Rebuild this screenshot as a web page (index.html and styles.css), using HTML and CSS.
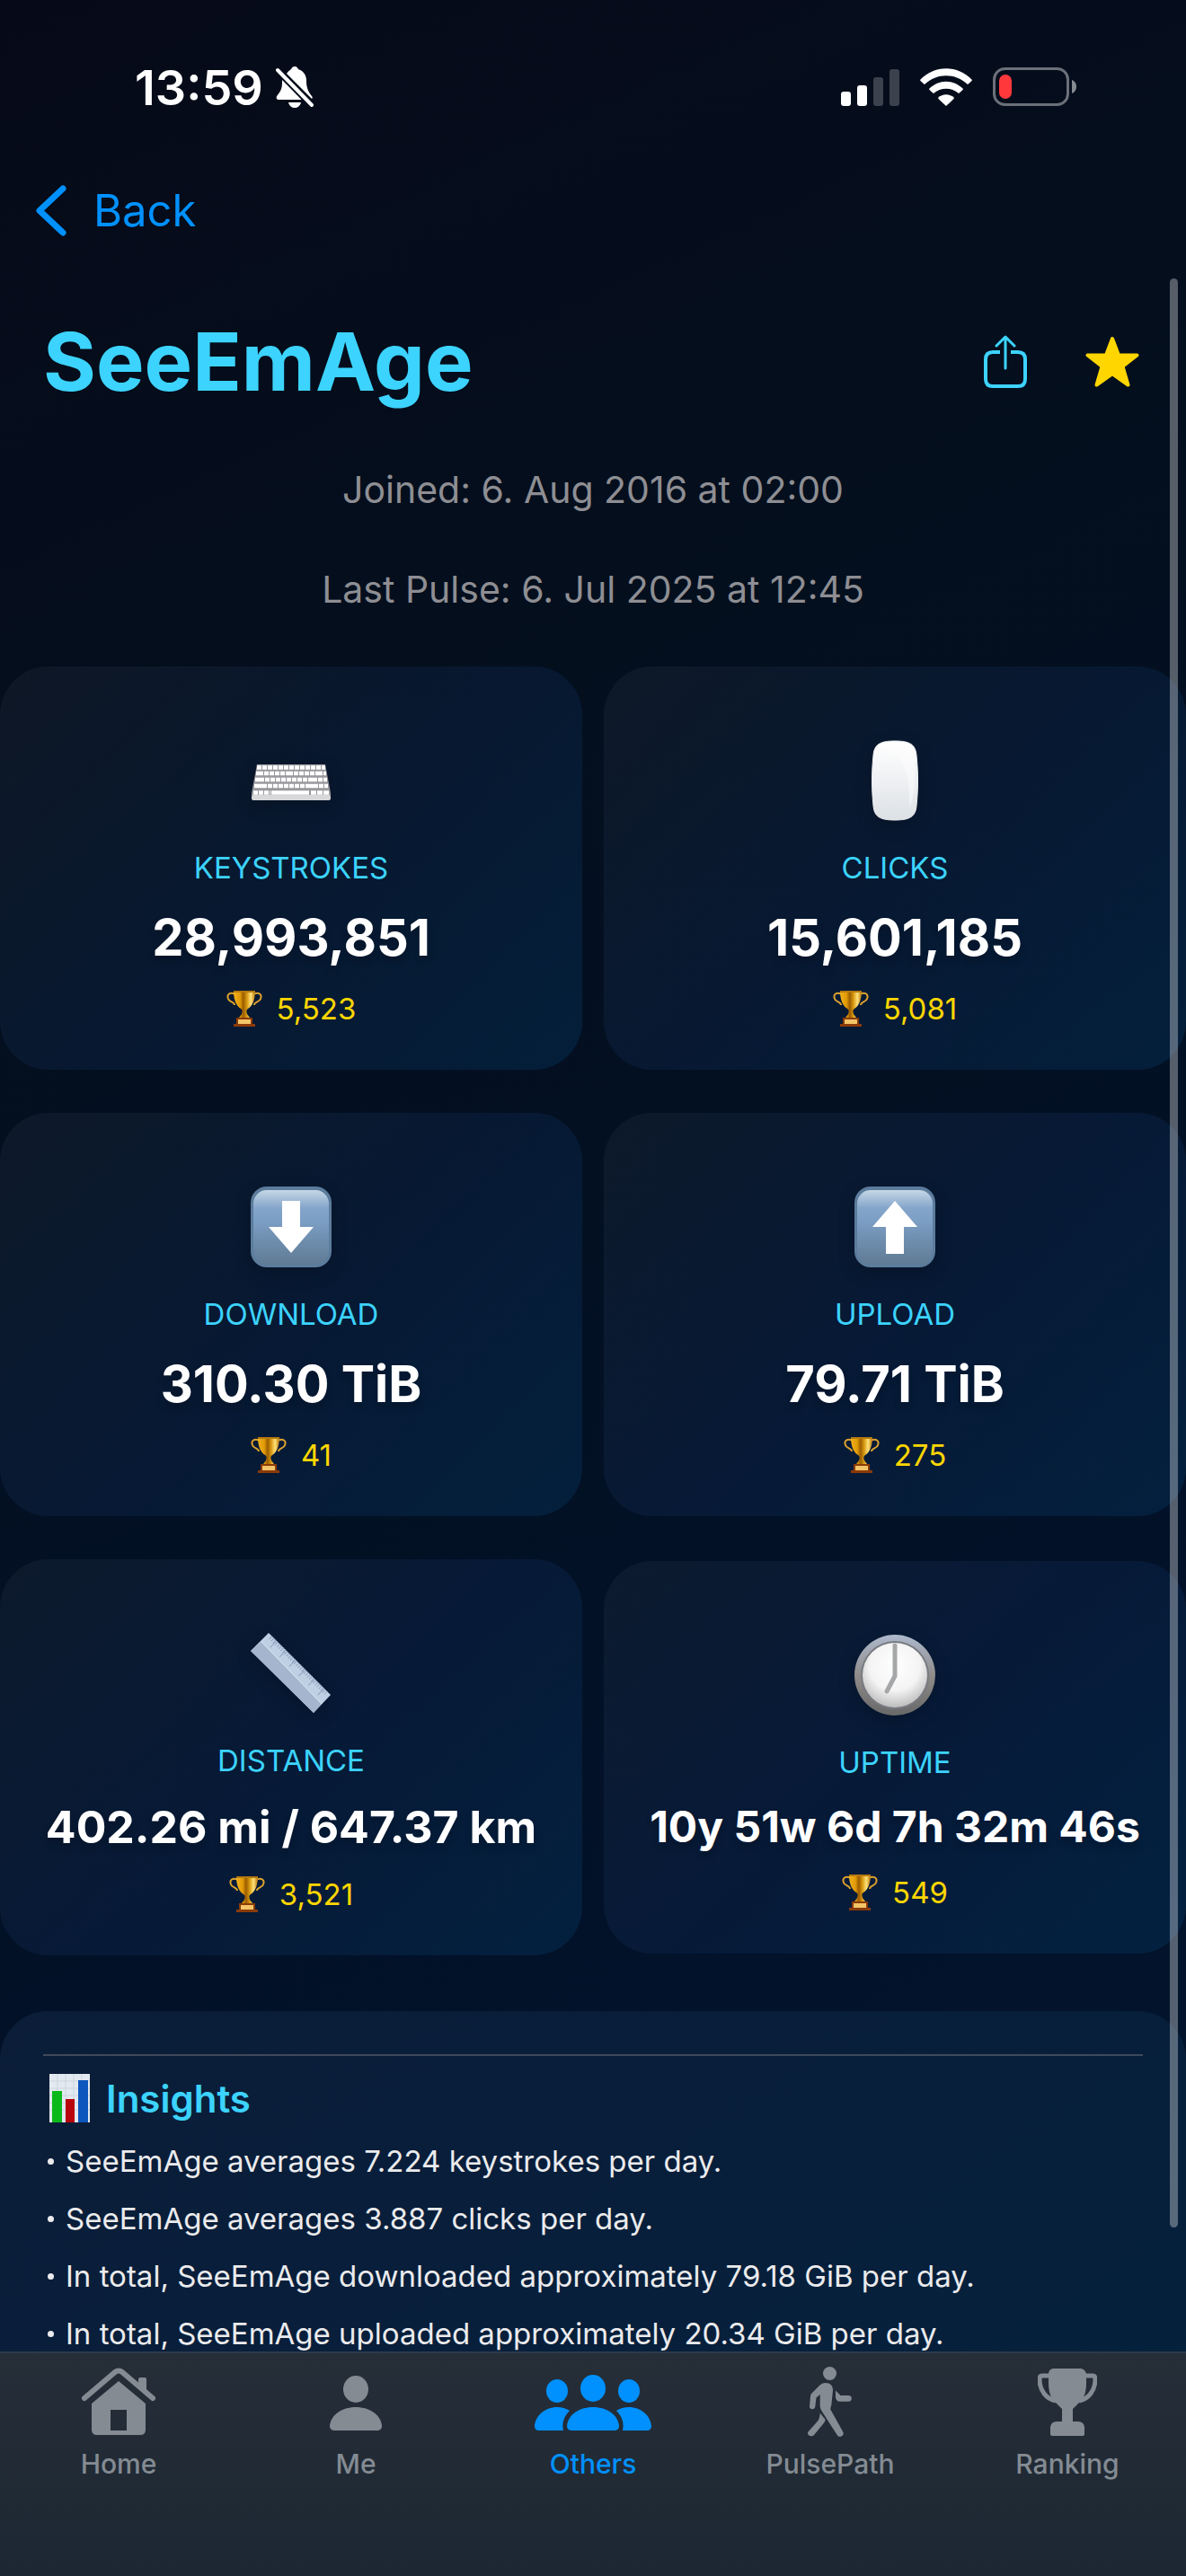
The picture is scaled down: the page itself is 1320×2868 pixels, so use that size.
FILE: index.html
```
<!DOCTYPE html>
<html lang="en">
<head>
<meta charset="utf-8">
<meta name="viewport" content="width=device-width, initial-scale=1">
<title>SeeEmAge</title>
<link rel="stylesheet" href="styles.css">
</head>
<body>
<svg class="defs" aria-hidden="true">
  <defs>
    <linearGradient id="gold" x1="0" x2="1" y1="0" y2="0">
      <stop offset="0" stop-color="#f2b21c"/><stop offset=".3" stop-color="#e09a06"/><stop offset=".45" stop-color="#9a5c00"/><stop offset=".62" stop-color="#d99a10"/><stop offset=".8" stop-color="#ffe27a"/><stop offset="1" stop-color="#b87406"/>
    </linearGradient>
    <linearGradient id="tile" x1="0" x2="0" y1="0" y2="1">
      <stop offset="0" stop-color="#c6d7e6"/><stop offset=".24" stop-color="#85a5ca"/><stop offset=".4" stop-color="#7c9fc5"/><stop offset="1" stop-color="#5f7a94"/>
    </linearGradient>
    <linearGradient id="mouse" x1="0" x2="0" y1="0" y2="1">
      <stop offset="0" stop-color="#fff"/><stop offset=".4" stop-color="#f2f3f5"/><stop offset="1" stop-color="#dce1e5"/>
    </linearGradient>
    <linearGradient id="rim" x1="0" x2="0" y1="0" y2="1">
      <stop offset="0" stop-color="#aeb9cd"/><stop offset=".5" stop-color="#8f8c8a"/><stop offset="1" stop-color="#686868"/>
    </linearGradient>
    <radialGradient id="face" cx=".5" cy=".35" r=".65">
      <stop offset="0" stop-color="#fff"/><stop offset=".6" stop-color="#f4f4f4"/><stop offset="1" stop-color="#bdbdbd"/>
    </radialGradient>
    <symbol id="trophy" viewBox="0 0 40 41">
      <path d="M10 5C4 2 0 5 2 10C3 14 9 13 9 17M30 5C36 2 40 5 38 10C37 14 31 13 31 17" fill="none" stroke="#dda12e" stroke-width="2"/>
      <path d="M8 1H32C32 11 29 18 24 21C22 22 22 24 23 27L26 31H14L17 27C18 24 18 22 16 21C11 18 8 11 8 1Z" fill="url(#gold)"/>
      <path d="M8 1H32V3H8Z" fill="#b67a10"/>
      <path d="M11 31H29V38H32V41H8V38H11Z" fill="#8a3a08"/>
      <path d="M13 33H27V38H13Z" fill="#f3c568"/>
    </symbol>
  </defs>
</svg>
<div class="screen">
  <header class="status">
    <div class="status-left">
      <span class="clock">13:59</span>
      <svg width="42" height="46" viewBox="0 0 42 46" fill="#fff" aria-label="Silent">
        <path d="M12 8C14 5 16 4 17 3C18 1 19 0 21 0S24 1 25 3C31 5 34 10 34 16C34 25 37 29 40 33C41 34 41 35 40 36Z"/>
        <path d="M8 13L29 37H3C1 37 0 35 1 33C5 28 7 25 7 18C7 16 7 15 8 13Z"/>
        <path d="M14 40H28C27 44 24 46 21 46S15 44 14 40Z"/>
        <path d="M2 4L40 43" stroke="#060c19" stroke-width="8"/>
        <path d="M2 4L40 43" stroke="#fff" stroke-width="4" stroke-linecap="round"/>
      </svg>
    </div>
    <div class="status-right">
      <svg width="65" height="42" viewBox="0 0 65 42" fill="#fff" aria-label="Signal">
        <rect x="0" y="26" width="11" height="16" rx="3"/><rect x="18" y="19" width="11" height="23" rx="3"/>
        <rect x="36" y="10" width="11" height="32" rx="3" opacity=".22"/><rect x="54" y="1" width="11" height="41" rx="3" opacity=".22"/>
      </svg>
      <svg width="58" height="42" viewBox="0 0 58 42" fill="#fff" aria-label="Wi-Fi">
        <path d="M0 13C16-4 42-4 58 13Q58 14 53 18C39 5 19 5 5 18Q0 14 0 13Z"/>
        <path d="M10 23C21 12 37 12 48 23Q48 24 43 28C35 21 23 21 15 28Q10 24 10 23Z"/>
        <path d="M20 33C25 28 33 28 38 33Q38 34 29 42Q20 34 20 33Z"/>
      </svg>
      <svg width="93" height="44" viewBox="0 0 93 44" aria-label="Battery low">
        <rect x="1.500" y="1.500" width="82" height="40" rx="12" fill="none" stroke="#6b7079" stroke-width="3"/>
        <rect x="7" y="8" width="14" height="27" rx="7" fill="#ff383c"/>
        <path d="M88 14C91 15 93 18 93 21.500S91 28 88 29Z" fill="#858a91"/>
      </svg>
    </div>
  </header>
  <nav class="navbar">
    <a class="back" href="#">
      <svg width="34" height="57" viewBox="0 0 34 57" fill="none" stroke="#0091ff" stroke-width="7" stroke-linecap="round" stroke-linejoin="round" aria-hidden="true"><path d="M30 4L4 28.500L30 53"/></svg>
      <span>Back</span>
    </a>
  </nav>
  <main class="content">
    <section class="profile">
      <div class="title-row">
        <h1>SeeEmAge</h1>
        <div class="actions">
          <button class="action" type="button" aria-label="Share">
            <svg width="48" height="60" viewBox="0 0 48 60" fill="none" stroke="#3cd3fe" stroke-width="4" stroke-linecap="butt" stroke-linejoin="round"><path d="M18 19H10Q2 19 2 27V49Q2 57 10 57H38Q46 57 46 49V27Q46 19 38 19H30"/><path d="M24 3V37M14 12L24 2L34 12" stroke-linecap="round" stroke-width="3"/></svg>
          </button>
          <button class="action" type="button" aria-label="Favorite">
            <svg width="60" height="58" viewBox="0 0 60 58" fill="#ffd600" stroke="#ffd600" stroke-width="4" stroke-linejoin="round"><path d="M30 3L37 21.500H57.500L41.500 34L47.500 54.500L30 42L12.500 54.500L18.500 34L2.500 21.500H23Z"/></svg>
          </button>
        </div>
      </div>
      <p>Joined: 6. Aug 2016 at 02:00</p>
      <p>Last Pulse: 6. Jul 2025 at 12:45</p>
    </section>
    <section class="stats">
      <article class="card">
        <svg class="emoji" viewBox="0 0 90 90" aria-hidden="true">
          <path d="M7 27H83L89 59V62H1V59Z" fill="#98989d"/><path d="M1 63V65Q1 67 3 67H87Q89 67 89 65V63L88 61H2Z" fill="#d8d8da"/>
          <g stroke="#fff" stroke-width="4.500"><path d="M7 30.500H83" stroke-dasharray="5 1"/><path d="M6 37H84" stroke-dasharray="8 1 5 1 5 1 5 1 5 1"/><path d="M5 44H85" stroke-dasharray="10 1 5 1 5 1 5 1 5 1 5 1 5 1 5 1 5 1"/><path d="M4 51H86" stroke-dasharray="14 1 5 1 5 1 5 1 5 1 5 1 5 1 5 1"/><path d="M3 58.500H22" stroke-dasharray="5 1"/><path d="M23 58.500H65"/><path d="M67 58.500H87" stroke-dasharray="6 1"/></g>
        </svg>
        <h2>KEYSTROKES</h2>
        <strong class="value">28,993,851</strong>
        <span class="rank"><svg width="40" height="41" aria-hidden="true"><use href="#trophy"/></svg>5,523</span>
      </article>
      <article class="card">
        <svg class="emoji" viewBox="0 0 90 90" aria-hidden="true">
          <path d="M45 1C62 1 68 5 69 17C71 36 71 54 69 73C68 85 62 89 45 89S22 85 21 73C19 54 19 36 21 17C22 5 28 1 45 1Z" fill="url(#mouse)" stroke="#eceef0"/>
          <path d="M35 9C58 18 62 45 61 76C68 60 69 30 65 12C60 6 50 6 35 9Z" fill="#fff" opacity=".4"/>
        </svg>
        <h2>CLICKS</h2>
        <strong class="value">15,601,185</strong>
        <span class="rank"><svg width="40" height="41" aria-hidden="true"><use href="#trophy"/></svg>5,081</span>
      </article>
      <article class="card">
        <svg class="emoji" viewBox="0 0 90 90" aria-hidden="true">
          <rect width="90" height="90" rx="18" fill="#5c7c9d"/><rect x="3" y="4" width="84" height="83" rx="15" fill="url(#tile)"/>
          <path d="M35 16H55V45H70L45 74L20 45H35Z" fill="#fff"/>
        </svg>
        <h2>DOWNLOAD</h2>
        <strong class="value">310.30 TiB</strong>
        <span class="rank"><svg width="40" height="41" aria-hidden="true"><use href="#trophy"/></svg>41</span>
      </article>
      <article class="card">
        <svg class="emoji" viewBox="0 0 90 90" aria-hidden="true">
          <rect width="90" height="90" rx="18" fill="#5c7c9d"/><rect x="3" y="4" width="84" height="83" rx="15" fill="url(#tile)"/>
          <path d="M35 75H55V45H70L45 16L20 45H35Z" fill="#fff"/>
        </svg>
        <h2>UPLOAD</h2>
        <strong class="value">79.71 TiB</strong>
        <span class="rank"><svg width="40" height="41" aria-hidden="true"><use href="#trophy"/></svg>275</span>
      </article>
      <article class="card">
        <svg class="emoji" viewBox="0 0 90 90" aria-hidden="true">
          <path d="M20 0L89 69L70 89L0 20Z" fill="#bfd0e4"/><path d="M12 10L79 79L70 89L0 20Z" fill="#a5b5cd"/>
          <path d="M22 5L84 67" stroke="#8ea3bf" stroke-width="5" stroke-dasharray="1 2"/>
          <path d="M21 9L80 68" stroke="#8ea3bf" stroke-width="9" stroke-dasharray="1 14" stroke-dashoffset="-5"/>
          <path d="M12 10L79 79" stroke="#dde8f5" stroke-width="1"/>
        </svg>
        <h2>DISTANCE</h2>
        <strong class="value value-m">402.26 mi / 647.37 km</strong>
        <span class="rank"><svg width="40" height="41" aria-hidden="true"><use href="#trophy"/></svg>3,521</span>
      </article>
      <article class="card">
        <svg class="emoji" viewBox="0 0 90 90" aria-hidden="true">
          <circle cx="45" cy="45" r="45" fill="url(#rim)"/><circle cx="45" cy="45" r="38" fill="#777a80"/><circle cx="45" cy="45" r="36" fill="url(#face)"/>
          <path d="M45 12V46L36 63" fill="none" stroke="#a5a7a8" stroke-width="5" stroke-linecap="round" stroke-linejoin="round"/>
        </svg>
        <h2>UPTIME</h2>
        <strong class="value value-s">10y 51w 6d 7h 32m 46s</strong>
        <span class="rank"><svg width="40" height="41" aria-hidden="true"><use href="#trophy"/></svg>549</span>
      </article>
    </section>
    <section class="insights">
      <h3>
        <svg width="45" height="54" viewBox="0 0 45 54" aria-hidden="true"><rect width="45" height="54" fill="#e3e9f0"/><path d="M0 8H45M0 16H45M0 24H45M0 32H45M0 40H45M9 0V54M18 0V54M27 0V54M36 0V54" stroke="#cbd6e2"/><rect x="3" y="19" width="11" height="35" fill="#0cb91b"/><rect x="18" y="28" width="10" height="26" fill="#b8040c"/><rect x="32" y="7" width="11" height="47" fill="#0d56bd"/></svg>
        Insights
      </h3>
      <ul>
        <li>SeeEmAge averages 7.224 keystrokes per day.</li>
        <li>SeeEmAge averages 3.887 clicks per day.</li>
        <li>In total, SeeEmAge downloaded approximately 79.18 GiB per day.</li>
        <li>In total, SeeEmAge uploaded approximately 20.34 GiB per day.</li>
      </ul>
    </section>
    <div class="scroll-thumb"></div>
  </main>
  <nav class="tabs">
    <a class="tab" href="#">
      <svg width="84" height="80" viewBox="0 0 84 80" fill="currentColor" aria-hidden="true">
        <path d="M4 35L38 6Q42 3 46 6L80 35" fill="none" stroke="currentColor" stroke-width="6" stroke-linecap="round"/><path d="M64 14Q64 12 66 12H71Q73 12 73 14V29L64 21Z"/>
        <path fill-rule="evenodd" d="M12 41L42 16L72 41V70Q72 76 66 76H18Q12 76 12 70ZM33 48V71H51V48Z"/>
      </svg>Home</a>
    <a class="tab" href="#">
      <svg width="58" height="80" viewBox="0 0 58 80" fill="currentColor" aria-hidden="true"><ellipse cx="29" cy="25" rx="14" ry="15"/><path d="M6 71C2 71 0 69 0 66C1 54 13 45 29 45S57 54 58 66C58 69 56 71 52 71Z"/></svg>Me</a>
    <a class="tab tab-active" href="#" aria-current="page">
      <svg width="130" height="80" viewBox="0 0 130 80" fill="currentColor" aria-hidden="true"><ellipse cx="65" cy="24" rx="14" ry="15"/><ellipse cx="25" cy="27" rx="12" ry="13"/><ellipse cx="105" cy="27" rx="12" ry="13"/><path d="M42 71C38 71 36 69 36 66C37 54 49 45 65 45S93 54 94 66C94 69 92 71 88 71Z"/><path d="M32 71H5C2 71 0 69 0 66C1 54 12 45 25 45Q33 45 39 49C33 55 30 62 32 71Z"/><path d="M98 71H125C128 71 130 69 130 66C129 54 118 45 105 45Q97 45 91 49C97 55 100 62 98 71Z"/></svg>Others</a>
    <a class="tab" href="#">
      <svg width="50" height="80" viewBox="0 0 50 80" fill="currentColor" aria-hidden="true"><circle cx="24.500" cy="7.500" r="7.500"/><path d="M20 18C25 18 28 21 28 26L26.500 41C26.500 44 25 45 25.300 47.500L39.500 73C41 77 35 80 32.700 76L16 50C13.500 46 13.500 44 13.700 40V31L9.500 34.500L8.300 44.500C8 48 2 48 2 44.500L3 33C3 31 4 30 5 29L13 21C15 19 17 18 20 18Z"/><path d="M13.700 51.500L19.700 59C19.500 60 19 61 18.500 62L7 76C4 79-2 76 .500 72.500L11.500 60C12.500 58 13.500 56 13.700 51.500Z"/><path d="M31 26.500L36.500 32H45.500C50 32 50 38.700 45.500 38.700H35C33 38.700 31 36 31 34Z"/></svg>PulsePath</a>
    <a class="tab" href="#">
      <svg width="66" height="80" viewBox="0 0 66 80" fill="currentColor" aria-hidden="true"><path d="M17 2H48Q53 3 54 8V18C54 27 52 34 48 38L39 47V61H45Q51 61 52 67V75Q52 77 50 77H16Q14 77 14 75V67Q15 61 21 61H27V47L18 38C14 34 12 27 12 18V8Q12 3 17 2Z"/><path d="M14 10H5Q2 10 2 14C2 27 10 36 20 38M52 10H61Q64 10 64 14C64 27 56 36 46 38" fill="none" stroke="currentColor" stroke-width="5"/></svg>Ranking</a>
  </nav>
</div>
</body>
</html>
```
FILE: styles.css
```
* { box-sizing: border-box; }

body {
  margin: 0;
  background: #030e20;
  color: #fff;
  font-family: Inter, "Liberation Sans", sans-serif;
}

h1, h2, h3, p, ul { margin: 0; padding: 0; font-weight: 400; }
a { color: inherit; text-decoration: none; }
svg { display: block; flex: none; }

.defs { position: absolute; width: 0; height: 0; }

.screen {
  display: flex;
  flex-direction: column;
  height: 100vh;
  overflow: hidden;
  background: linear-gradient(155deg, #060a18 0%, #040f1e 30%, #02122a 75%, #02182e 100%);
}

/* Status bar */
.status {
  display: flex;
  align-items: center;
  justify-content: space-between;
  height: 158px;
  padding: 36px 122px 0 150px;
}
.status-left { display: flex; align-items: center; gap: 14px; }
.status-right { display: flex; align-items: center; gap: 23px; }
.clock { font-size: 54px; font-weight: 600; }

.navbar { display: flex; align-items: center; height: 152px; padding: 0 40px; }
.back { display: flex; align-items: center; gap: 30px; color: #0091ff; font-size: 49px; }

/* Scrolling content */
.content { position: relative; flex: 1; min-height: 0; overflow: hidden; }

.profile {
  display: flex;
  flex-direction: column;
  gap: 60px;
  padding: 36px 48px 60px;
  text-align: center;
}
.profile p { color: #8e8e93; font-size: 41px; line-height: 51px; }
.title-row { display: flex; align-items: center; justify-content: space-between; padding-right: 4px; }
.title-row h1 { color: #3cd3fe; font-size: 90px; font-weight: 700; line-height: 114px; }
.actions { display: flex; align-items: center; gap: 65px; }
.action { padding: 0; border: 0; background: none; cursor: pointer; }

.stats {
  display: grid;
  grid-template-columns: 1fr 1fr;
  align-items: center;
  gap: 48px 24px;
}
.card {
  display: flex;
  flex-direction: column;
  align-items: center;
  padding: 82px 16px 48px;
  border-radius: 54px;
  background: linear-gradient(135deg, rgba(255, 255, 255, .04), rgba(20, 55, 110, .22) 50%, rgba(5, 70, 120, .28));
}
.emoji { width: 90px; height: 90px; filter: drop-shadow(0 6px 9px rgba(0, 0, 0, .2)); }
.card h2 { margin-top: 32px; color: #3cd3fe; font-size: 33px; line-height: 40px; }
.value { margin-top: 24px; font-size: 56px; font-weight: 700; line-height: 68px; white-space: nowrap; text-shadow: 0 6px 9px rgba(0, 0, 0, .2); }
.value-m { font-size: 50px; line-height: 60px; }
.value-s { font-size: 48px; line-height: 56px; }
.rank {
  display: flex;
  align-items: center;
  gap: 16px;
  height: 41px;
  margin-top: 24px;
  color: #ffd600;
  font-size: 33px;
}

.insights {
  margin-top: 62px;
  padding: 48px;
  border-radius: 54px 54px 0 0;
  background: linear-gradient(135deg, rgba(60, 100, 150, .15), rgba(20, 80, 130, .18));
}
.insights h3 {
  display: flex;
  align-items: center;
  gap: 18px;
  padding: 20px 0 11px 7px;
  border-top: 2px solid #3f4a5a;
  color: #3cd3fe;
  font-size: 42px;
  font-weight: 600;
}
.insights ul { list-style: none; }
.insights li { display: flex; align-items: center; gap: 13px; padding-left: 5px; color: #ebebed; font-size: 33px; line-height: 64px; white-space: nowrap; }
.insights li::before { content: ""; width: 7px; height: 7px; border-radius: 50%; background: currentColor; }

.scroll-thumb {
  position: absolute;
  top: 0;
  right: 9px;
  width: 9px;
  height: 94%;
  border-radius: 5px;
  background: rgba(255, 255, 255, .33);
}

/* Tab bar */
.tabs {
  display: grid;
  grid-template-columns: repeat(5, 1fr);
  height: 250px;
  border-top: 2px solid #2c3a4b;
  background: linear-gradient(#262e38, #1c2733);
  font-size: 30px;
  font-weight: 500;
}
.tab { display: flex; flex-direction: column; align-items: center; gap: 10px; padding-top: 15px; color: #848b93; }
.tab-active { color: #0091ff; }
```
